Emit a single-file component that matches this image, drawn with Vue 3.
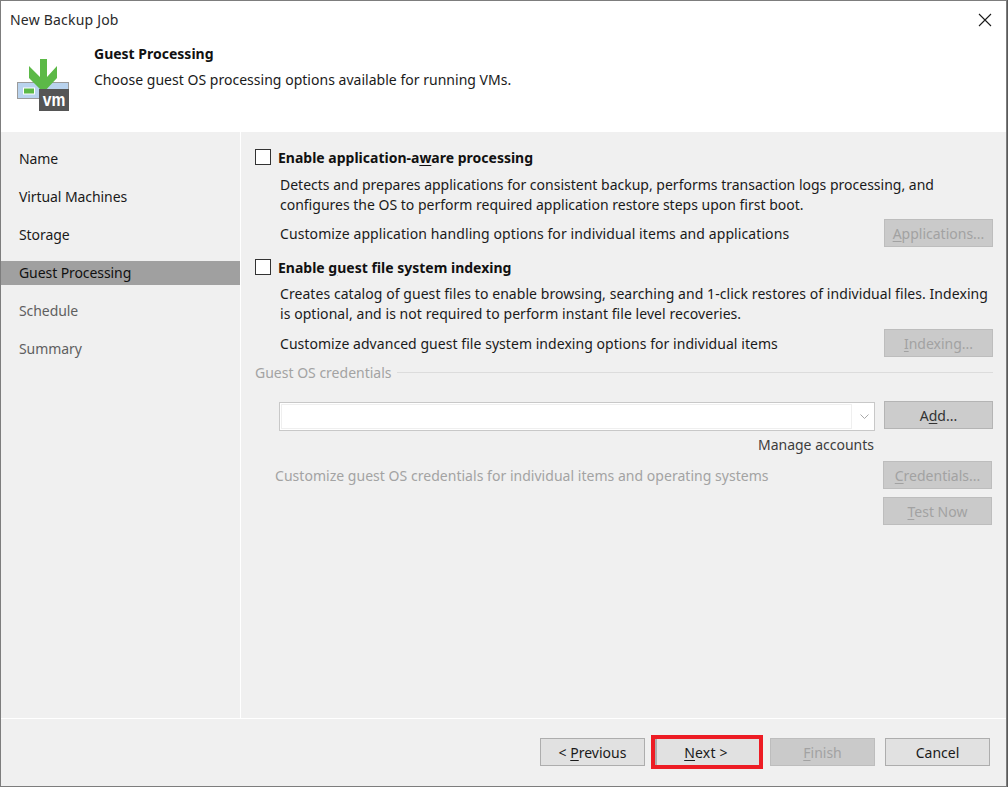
<script setup>
const nav = [
  { label: 'Name', state: 'done' },
  { label: 'Virtual Machines', state: 'done' },
  { label: 'Storage', state: 'done' },
  { label: 'Guest Processing', state: 'active' },
  { label: 'Schedule', state: 'todo' },
  { label: 'Summary', state: 'todo' },
]
</script>

<template>
  <div class="window">
    <div class="titlebar">
      <span class="title">New Backup Job</span>
      <svg class="close" width="14" height="14" viewBox="0 0 14 14"><path d="M1 1L13 13M13 1L1 13" stroke="#1a1a1a" stroke-width="1.1" fill="none"/></svg>
    </div>
    <header class="head">
      <div class="logo">
        <svg width="54" height="54" viewBox="0 0 54 54">
          <rect x="1.5" y="24.500" width="51" height="16" fill="#b9d3ee" stroke="#9b9b9b"/>
          <rect x="7.500" y="30" width="11" height="6" fill="#5cb947" stroke="#fff"/>
          <path d="M24 1H31V19L41 8V20L27.500 34.500L13 20V8L24 19Z" fill="#5cb947"/>
          <rect x="23" y="31" width="30" height="22" fill="#555"/>
        </svg>
        <span class="vm">vm</span>
      </div>
      <div class="head-text">
        <div class="head-title">Guest Processing</div>
        <div class="head-sub">Choose guest OS processing options available for running VMs.</div>
      </div>
    </header>
    <div class="body">
      <nav class="side">
        <div v-for="item in nav" :key="item.label" class="nav-item" :class="item.state">{{ item.label }}</div>
      </nav>
      <main class="main">
        <label class="check first"><span class="box"></span><span>Enable application-a<u>w</u>are processing</span></label>
        <p class="desc d1">Detects and prepares applications for consistent backup, performs transaction logs processing, and<br>configures the OS to perform required application restore steps upon first boot.</p>
        <div class="row r1">
          <span>Customize application handling options for individual items and applications</span>
          <button class="btn off wide"><u>A</u>pplications...</button>
        </div>
        <label class="check second"><span class="box"></span><span>Enable <u>g</u>uest file system indexing</span></label>
        <p class="desc d2">Creates catalog of guest files to enable browsing, searching and 1-click restores of individual files. Indexing<br>is optional, and is not required to perform instant file level recoveries.</p>
        <div class="row r2">
          <span>Customize advanced guest file system indexing options for individual items</span>
          <button class="btn off wide"><u>I</u>ndexing...</button>
        </div>
        <div class="legend"><span>Guest OS credentials</span><i></i></div>
        <div class="cred-row">
          <div class="combo">
            <div class="combo-field"></div>
            <svg width="9" height="5" viewBox="0 0 9 5"><path d="M0.500 0.500L4.500 4.500L8.500 0.500" stroke="#a8a8a8" fill="none"/></svg>
          </div>
          <button class="btn wide add">A<u>d</u>d...</button>
        </div>
        <div class="manage">Manage accounts</div>
        <div class="row r3">
          <span>Customize guest OS credentials for individual items and operating systems</span>
          <button class="btn off wide"><u>C</u>redentials...</button>
        </div>
        <div class="r4"><button class="btn off wide"><u>T</u>est Now</button></div>
      </main>
    </div>
    <footer class="foot">
      <button class="btn pale foot-btn">&lt; <u>P</u>revious</button>
      <div class="next-wrap">
        <button class="btn pale foot-btn next"><u>N</u>ext &gt;</button>
        <span class="marker"></span>
      </div>
      <button class="btn off foot-btn"><u>F</u>inish</button>
      <button class="btn pale foot-btn cancel">Cancel</button>
    </footer>
  </div>
</template>

<style>
html, body { margin: 0; background: #5a5a5a; }
</style>

<style scoped>
.window {
  box-sizing: border-box;
  width: 1007px;
  height: 787px;
  border: 1px solid #7d7d7d;
  background: #fff;
  display: flex;
  flex-direction: column;
  font-family: "Noto Sans", "Open Sans", sans-serif;
  font-size: 14px;
  color: #1a1a1a;
  overflow: hidden;
}
u { text-underline-offset: 2px; text-decoration-thickness: 1px; }
.titlebar {
  height: 37px;
  flex: none;
  display: flex;
  align-items: center;
  justify-content: space-between;
  padding: 0 14px 0 9px;
}
.title { color: #2a2a2a; letter-spacing: 0.2px; }
.close { margin-top: 1px; }
.head {
  height: 94px;
  flex: none;
  display: flex;
  box-sizing: border-box;
}
.logo { position: relative; width: 54px; height: 54px; margin: 20px 0 0 15px; }
.logo svg { display: block; }
.vm {
  position: absolute;
  left: 23px;
  top: 31px;
  width: 30px;
  height: 22px;
  text-align: center;
  color: #fff;
  font: 700 19px/21px "Liberation Sans", sans-serif;
  transform: scaleX(0.82);
}
.head-text { margin: 5px 0 0 24px; }
.head-title { font-weight: 700; line-height: 22px; color: #111; }
.head-sub { line-height: 22px; margin-top: 4px; letter-spacing: 0.02px; }
.body { flex: 1; display: flex; background: #f0f0f0; min-height: 0; }
.side {
  width: 239px;
  flex: none;
  border-right: 1px solid #fff;
  padding-top: 15px;
  display: flex;
  flex-direction: column;
  gap: 14px;
}
.nav-item { height: 24px; line-height: 24px; padding-left: 18px; letter-spacing: -0.08px; }
.nav-item.active { background: #a0a0a0; color: #111; }
.nav-item.todo { color: #5f5f5f; }
.main { flex: 1; padding: 0 13px 0 14px; min-width: 0; }
.check { display: flex; align-items: center; height: 22px; font-weight: 700; color: #111; }
.first { margin-top: 14px; }
.second { margin-top: 9px; }
.box {
  box-sizing: border-box;
  width: 16px;
  height: 16px;
  border: 1px solid #333;
  background: #fff;
  margin-right: 7px;
}
.desc { margin: 0 0 0 25px; line-height: 20px; }
.d1 { margin-top: 7px; }
.d2 { margin-top: 6px; letter-spacing: 0.06px; }
.row { display: flex; align-items: center; justify-content: space-between; padding-left: 25px; }
.r1 { margin-top: 4px; letter-spacing: 0.09px; }
.r2 { margin-top: 5px; letter-spacing: 0.05px; }
.r3 { padding-left: 20px; margin-top: 5px; color: #a3a3a3; padding-right: 1px; letter-spacing: 0.03px; }
.r4 { display: flex; justify-content: flex-end; margin-top: 8px; padding-right: 1px; }
.btn {
  box-sizing: border-box;
  height: 28px;
  border: 1px solid #b4b4b4;
  background: #cccccc;
  color: #333;
  font: inherit;
  letter-spacing: 0;
  padding: 0;
  text-align: center;
}
.btn.off { background: #cacaca; border-color: #bdbdbd; color: #a2a2a2; }
.btn.pale { background: #e1e1e1; border-color: #adadad; color: #1a1a1a; }
.wide { width: 109px; flex: none; }
.legend { display: flex; align-items: center; gap: 5px; margin-top: 4px; color: #a3a3a3; height: 22px; margin-bottom: 19px; }
.legend i { flex: 1; height: 1px; background: #dcdcdc; }
.cred-row { display: flex; justify-content: space-between; align-items: flex-start; padding-left: 24px; margin-top: -1px; }
.combo {
  box-sizing: border-box;
  width: 596px;
  height: 29px;
  margin-top: 1px;
  border: 1px solid #c8c8c8;
  background: #fff;
  display: flex;
  align-items: center;
  gap: 8px;
  padding: 1px 5px 1px 1px;
}
.combo-field { flex: 1; height: 100%; box-sizing: border-box; border: 1px solid #efefef; }
.manage { text-align: right; margin-top: 3px; line-height: 22px; padding-right: 119px; color: #3d3d3d; }
.foot {
  flex: none;
  height: 68px;
  box-sizing: border-box;
  border-top: 1px solid #fff;
  background: #f0f0f0;
  padding: 19px 16px 0 0;
  display: flex;
  justify-content: flex-end;
  gap: 10px;
  align-items: flex-start;
}
.foot-btn { width: 105px; }
.next-wrap { position: relative; display: flex; }
.next { border-left: 2px solid #0a78d7; padding-right: 4px; letter-spacing: 0.2px; }
.marker {
  position: absolute;
  left: -4px;
  top: -3px;
  width: 112px;
  height: 34px;
  box-sizing: border-box;
  border: 4px solid #ed1c24;
  pointer-events: none;
}
</style>
